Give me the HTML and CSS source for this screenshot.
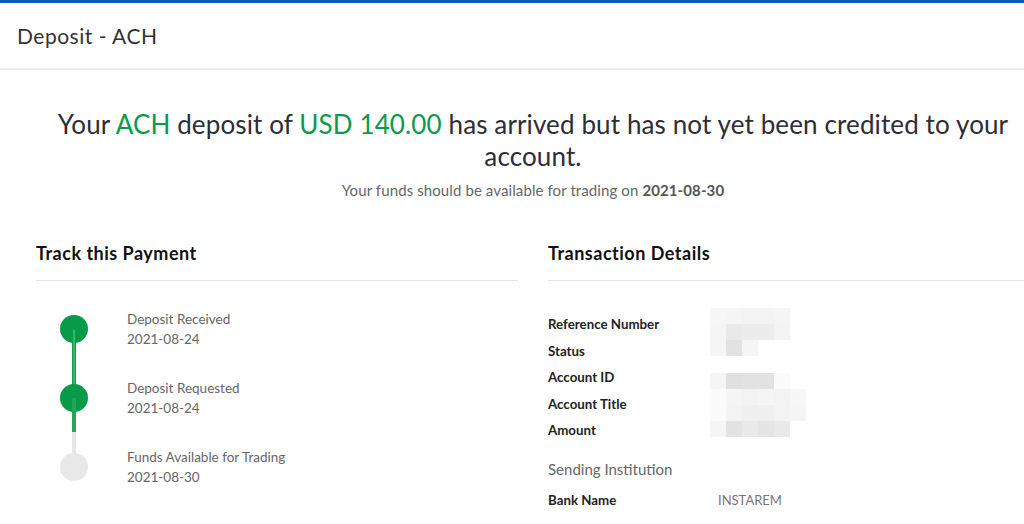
FILE: index.html
```html
<!DOCTYPE html>
<html lang="en">
<head>
<meta charset="utf-8">
<title>Deposit - ACH</title>
<link rel="stylesheet" href="styles.css">
</head>
<body>
<div class="topbar"></div>
<header class="page-header">
  <h1 class="page-title">Deposit - ACH</h1>
</header>
<main class="content">
  <section class="summary">
    <p class="headline">Your <span class="hl">ACH</span> deposit of <span class="hl">USD 140.00</span> has arrived but has not yet been credited to your account.</p>
    <p class="sub">Your funds should be available for trading on <b>2021-08-30</b></p>
  </section>
  <div class="columns">
    <section class="panel">
      <h2 class="panel-title">Track this Payment</h2>
      <ol class="timeline">
        <li class="step done">
          <span class="marker"></span>
          <div class="step-text"><div>Deposit Received</div><div>2021-08-24</div></div>
        </li>
        <li class="step current">
          <span class="marker"></span>
          <div class="step-text"><div>Deposit Requested</div><div>2021-08-24</div></div>
        </li>
        <li class="step pending">
          <span class="marker"></span>
          <div class="step-text"><div>Funds Available for Trading</div><div>2021-08-30</div></div>
        </li>
      </ol>
    </section>
    <section class="panel">
      <h2 class="panel-title">Transaction Details</h2>
      <div class="details">
        <dl class="detail-list">
          <dt>Reference Number</dt><dd></dd>
          <dt>Status</dt><dd></dd>
          <dt>Account ID</dt><dd></dd>
          <dt>Account Title</dt><dd></dd>
          <dt>Amount</dt><dd></dd>
        </dl>
        <div class="mosaic mosaic-1">
          <i class="b"></i><i class="c"></i><i class="d"></i><i class="d"></i><i class="c"></i><i></i>
          <i class="c"></i><i class="g"></i><i class="f"></i><i class="f"></i><i class="d"></i><i></i>
          <i class="c"></i><i class="i"></i><i class="c"></i><i></i><i></i><i></i>
        </div>
        <div class="mosaic mosaic-2">
          <i class="c"></i><i class="j"></i><i class="i"></i><i class="i"></i><i class="a"></i><i></i>
          <i class="a"></i><i class="c"></i><i class="d"></i><i class="c"></i><i class="d"></i><i class="b"></i>
          <i class="a"></i><i class="d"></i><i class="e"></i><i class="e"></i><i class="d"></i><i class="c"></i>
          <i class="c"></i><i class="i"></i><i class="g"></i><i class="h"></i><i class="g"></i><i></i>
        </div>
      </div>
      <h3 class="sub-title">Sending Institution</h3>
      <dl class="detail-list">
        <dt>Bank Name</dt><dd class="val">INSTAREM</dd>
      </dl>
    </section>
  </div>
</main>
</body>
</html>
```

FILE: styles.css
```css
html, body {
  margin: 0;
  padding: 0;
  overflow: hidden;
  background: #fff;
}
body {
  font-family: Lato, "Liberation Sans", sans-serif;
  color: #333;
  width: 1024px;
  height: 524px;
}
.topbar {
  height: 3px;
  background: #0d57c1;
}
.page-header {
  height: 65px;
  border-bottom: 2px solid #ebebeb;
  display: flex;
  align-items: center;
  padding-left: 17px;
}
.page-title {
  margin: 0;
  font-weight: 400;
  font-size: 21px;
  color: #333;
  letter-spacing: 0.5px;
}
.content {
  width: 994px;
  padding-left: 36px;
}
.summary {
  text-align: center;
  padding-top: 38px;
}
.headline {
  margin: 0;
  font-size: 26px;
  line-height: 32px;
  letter-spacing: 0.12px;
  color: #2d2d36;
}
.hl {
  color: #0a9a4a;
}
.sub {
  margin: 8px 0 0;
  font-size: 15px;
  line-height: 20px;
  letter-spacing: 0.1px;
  color: #666;
}
.sub b {
  color: #555;
}
.columns {
  display: grid;
  grid-template-columns: 482px 482px;
  column-gap: 30px;
  margin-top: 41px;
}
.panel-title {
  margin: 0;
  font-size: 18px;
  line-height: 24px;
  font-weight: 700;
  letter-spacing: 0.5px;
  color: #111;
  padding-bottom: 15px;
  border-bottom: 1px solid #e3e3e3;
}
.timeline {
  list-style: none;
  margin: 0;
  padding: 13px 0 0 24px;
}
.step {
  display: flex;
  align-items: center;
  height: 69px;
  position: relative;
}
.marker {
  width: 28px;
  height: 28px;
  border-radius: 50%;
  background: #079a48;
  flex: none;
  position: relative;
  z-index: 1;
}
.pending .marker {
  background: #e8e8e8;
}
.step-text {
  margin-left: 39px;
  font-size: 13.5px;
  line-height: 20px;
  color: #666;
}
.done .marker::after,
.current .marker::after {
  content: "";
  position: absolute;
  left: 12px;
  top: 14px;
  width: 4px;
  height: 69px;
  z-index: -1;
  box-sizing: border-box;
  border: 1px solid #0d9a4c;
  background: #38b46d;
}
.current .marker::after {
  border: none;
  background: linear-gradient(to bottom, #22a65a 0, #22a65a 50%, #e6e6e6 50%, #e6e6e6 100%);
}
.details {
  position: relative;
  margin-top: 30px;
}
.detail-list {
  display: grid;
  grid-template-columns: 170px 1fr;
  margin: 0;
  row-gap: 0;
}
.detail-list dt {
  font-size: 13.3px;
  line-height: 26.5px;
  font-weight: 700;
  color: #222;
}
.detail-list dd {
  margin: 0;
  font-size: 13px;
  line-height: 26.5px;
  color: #777;
}
.mosaic {
  position: absolute;
  left: 162px;
  display: grid;
  grid-template-columns: repeat(6, 16px);
  grid-auto-rows: 16px;
}
.mosaic-1 { top: -3px; }
.mosaic-2 { top: 62px; }
.mosaic i { display: block; }
.mosaic .a { background: #fbfbfb; }
.mosaic .b { background: #f7f7f7; }
.mosaic .c { background: #f5f5f5; }
.mosaic .d { background: #f3f3f3; }
.mosaic .e { background: #f0f0f0; }
.mosaic .f { background: #ececec; }
.mosaic .g { background: #e9e9e9; }
.mosaic .h { background: #e5e5e5; }
.mosaic .i { background: #e2e2e2; }
.mosaic .j { background: #e0e0e0; }
.sub-title {
  margin: 14px 0 7px;
  font-size: 15px;
  line-height: 22px;
  font-weight: 400;
  color: #666;
}
```
